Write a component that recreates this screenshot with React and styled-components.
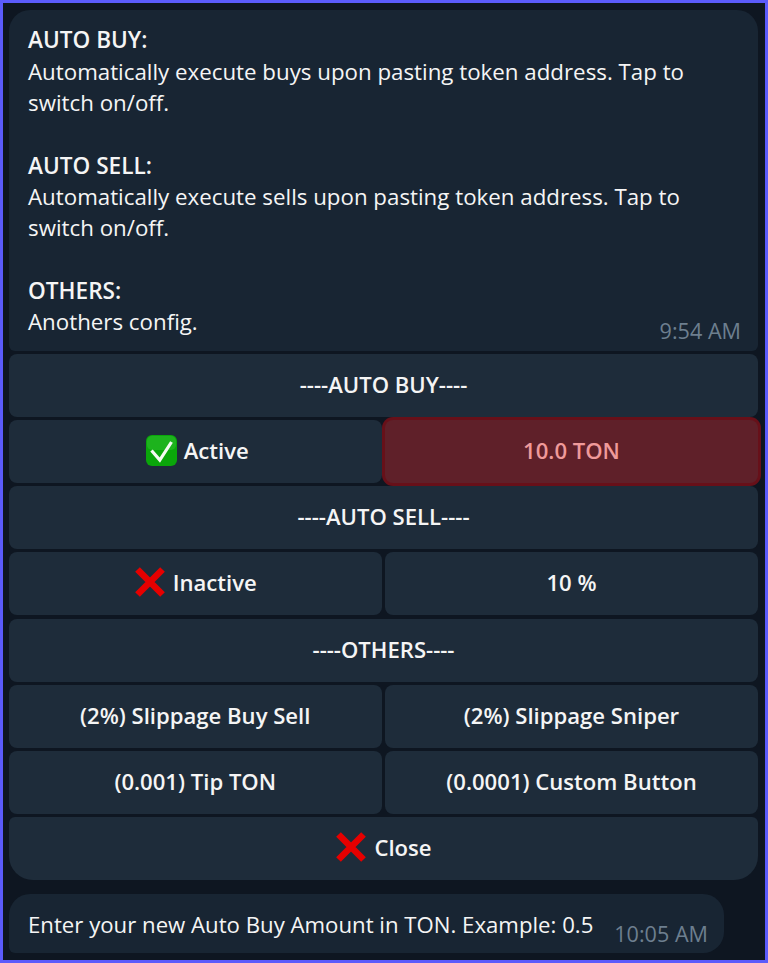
import React from "react";
import styled, { createGlobalStyle } from "styled-components";

const Global = createGlobalStyle`
  html, body { margin: 0; padding: 0; background: #0e1621; }
  * { box-sizing: border-box; }
`;

const Frame = styled.div`
  width: 768px;
  height: 963px;
  overflow: hidden;
  border: 3px solid #5b5bfb;
  background: #0e1621;
  padding: 7px 7px 0 6px;
  font-family: "Open Sans", sans-serif;
  color: #f5f5f5;
  display: flex;
  flex-direction: column;
`;

const Bubble = styled.div`
  position: relative;
  flex: none;
  width: 749px;
  height: 341px;
  background: #182533;
  border-radius: 21px 21px 6px 6px;
  padding: 14.4px 19px 0;
  font-size: 22.3px;
  line-height: 31.3px;
`;

const Heading = styled.div`
  font-weight: 600;
  font-size: 22.6px;
`;

const Para = styled.div`
  margin-bottom: 31.3px;
`;

const Time = styled.span`
  position: absolute;
  right: 17px;
  bottom: 6px;
  font-size: 21.6px;
  line-height: 28px;
  color: #6d7f8f;
`;

const Keyboard = styled.div`
  flex: none;
  margin-top: 3px;
  width: 749px;
  display: grid;
  grid-template-columns: 372.5px 373px;
  grid-auto-rows: 63px;
  gap: 3.15px 3.5px;
`;

const Key = styled.div`
  grid-column: ${(p) => (p.$wide ? "1 / -1" : "auto")};
  background: ${(p) => (p.$selected ? "#5f2029" : "#1e2c3a")};
  color: ${(p) => (p.$selected ? "#ef9a9a" : "#f5f5f5")};
  box-shadow: ${(p) => (p.$selected ? "0 0 0 3px #671019" : "none")};
  position: relative;
  z-index: ${(p) => (p.$selected ? 1 : 0)};
  border-radius: ${(p) => (p.$last ? "6px 6px 24px 24px" : "8px")};
  display: flex;
  align-items: center;
  justify-content: center;
  gap: 7px;
  padding: 0 0 3px ${(p) => (p.$shift ? "4px" : "0")};
  font-size: 22.1px;
  font-weight: 600;
  white-space: nowrap;
`;

const Reply = styled.div`
  position: relative;
  flex: none;
  margin-top: 14px;
  width: 715px;
  height: 59px;
  background: #182533;
  border-radius: 21px 21px 21px 6px;
  padding: 15px 19px 0;
  font-size: 22.2px;
  line-height: 31px;
`;

const ReplyTime = styled(Time)`
  right: 16px;
  bottom: 5px;
`;

const Check = () => (
  <svg width="31" height="31" viewBox="0 0 31 31">
    <rect x="0" y="0" width="31" height="31" rx="6" fill="#0aa60a" />
    <rect x="1" y="1" width="29" height="14" rx="5" fill="#35c435" opacity="0.45" />
    <path d="M5.5 15.5 L13.8 25 L25.5 7" fill="none" stroke="#f4fbf2" strokeWidth="3.2" />
  </svg>
);

const Cross = () => (
  <svg width="32" height="32" viewBox="0 0 32 32">
    <path d="M3.5 3.5 L28.5 28.5 M28.5 3.5 L3.5 28.5" fill="none" stroke="#e60000" strokeWidth="6.6" />
  </svg>
);

export default function App() {
  return (
    <>
      <Global />
      <Frame>
        <Bubble>
          <Heading>AUTO BUY:</Heading>
          <Para>
            Automatically execute buys upon pasting token address. Tap to
            <br />
            switch on/off.
          </Para>
          <Heading>AUTO SELL:</Heading>
          <Para>
            Automatically execute sells upon pasting token address. Tap to
            <br />
            switch on/off.
          </Para>
          <Heading>OTHERS:</Heading>
          <div>Anothers config.</div>
          <Time>9:54 AM</Time>
        </Bubble>
        <Keyboard>
          <Key $wide>----AUTO BUY----</Key>
          <Key $shift>
            <Check />
            Active
          </Key>
          <Key $selected>10.0 TON</Key>
          <Key $wide>----AUTO SELL----</Key>
          <Key>
            <Cross />
            Inactive
          </Key>
          <Key>10 %</Key>
          <Key $wide>----OTHERS----</Key>
          <Key>(2%) Slippage Buy Sell</Key>
          <Key>(2%) Slippage Sniper</Key>
          <Key>(0.001) Tip TON</Key>
          <Key>(0.0001) Custom Button</Key>
          <Key $wide $last>
            <Cross />
            Close
          </Key>
        </Keyboard>
        <Reply>
          Enter your new Auto Buy Amount in TON. Example: 0.5
          <ReplyTime>10:05 AM</ReplyTime>
        </Reply>
      </Frame>
    </>
  );
}
